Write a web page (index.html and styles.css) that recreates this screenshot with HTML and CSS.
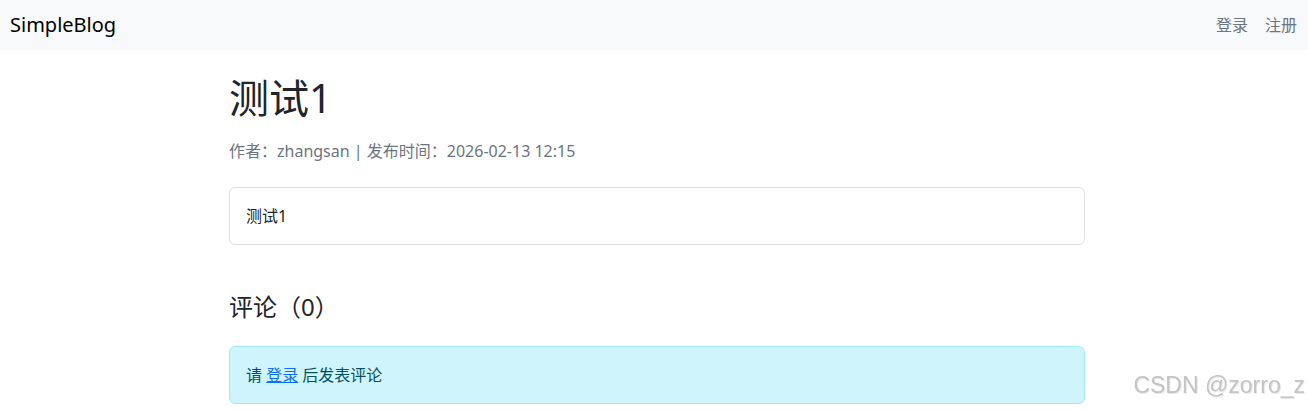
FILE: index.html
```html
<!DOCTYPE html>
<html lang="zh-CN">
<head>
  <meta charset="UTF-8">
  <meta name="viewport" content="width=device-width, initial-scale=1.0">
  <title>测试1 - SimpleBlog</title>
  <link rel="stylesheet" href="styles.css">
</head>
<body>
  <nav class="navbar">
    <a class="brand" href="#">SimpleBlog</a>
    <div class="nav-links">
      <a href="#">登录</a>
      <a href="#">注册</a>
    </div>
  </nav>

  <div class="main">
    <h1 class="post-title">测试1</h1>
    <p class="post-meta">作者：zhangsan | 发布时间：2026-02-13 12:15</p>

    <div class="card">
      <div class="card-body">测试1</div>
    </div>

    <h4 class="comments-title">评论（0）</h4>
    <div class="alert-info">请 <a href="#">登录</a> 后发表评论</div>
  </div>

  <div class="watermark">CSDN @zorro_z</div>
</body>
</html>
```

FILE: styles.css
```css
/* Bootstrap-like base */
body {
  font-family: "Segoe UI", "Noto Sans", "Noto Sans CJK SC", sans-serif;
  font-size: 16px;
  line-height: 1.5;
  color: #212529;
  background: #fff;
  margin: 0;
}
a {
  color: #0d6efd;
}
.navbar {
  background-color: #f8f9fa;
  height: 50px;
  display: flex;
  align-items: center;
  justify-content: space-between;
  padding: 0 11px 0 10px;
}
.brand {
  font-size: 20px;
  color: #000;
  text-decoration: none;
}
.nav-links {
  display: flex;
  gap: 17px;
}
.nav-links a {
  color: #6c757d;
  text-decoration: none;
  font-size: 16px;
}
/* Container */
.main {
  max-width: 856px;
  margin: 0 auto;
  padding: 24px 0 0 6px;
}
.post-title {
  font-size: 40px;
  font-weight: 400;
  line-height: 1.2;
  margin: 0 0 17px;
}
.post-meta {
  color: #6c757d;
  margin: 0 0 24px;
}
.card {
  border: 1px solid #dee2e6;
  border-radius: 6px;
}
.card-body {
  padding: 16px;
}
.comments-title {
  font-size: 24px;
  font-weight: 400;
  line-height: 1.2;
  margin: 48px 0 24px;
}
.alert-info {
  background: #cff4fc;
  border: 1px solid #9eeaf9;
  border-radius: 6px;
  color: #055160;
  padding: 16px;
}
.alert-info a {
  color: #0d6efd;
}
.watermark {
  position: fixed;
  right: 3px;
  bottom: 8px;
  font-family: "Liberation Sans", sans-serif;
  font-size: 23px;
  color: #c4c4c4;
  text-shadow: 1px 1px 1px #e6e6e6;
}
```
